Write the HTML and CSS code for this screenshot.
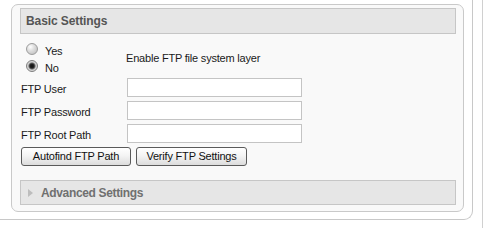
FILE: index.html
```html
<!DOCTYPE html>
<html>
<head>
<meta charset="utf-8">
<title>FTP Settings</title>
<link rel="stylesheet" href="styles.css">
</head>
<body>
<div class="viewport">
  <div class="outer">
    <div class="panel">
      <div class="section-head">Basic Settings</div>
      <div class="toggle">
        <div class="radios">
          <label class="radio-row"><input type="radio" name="ftp" class="radio"><span>Yes</span></label>
          <label class="radio-row"><input type="radio" name="ftp" class="radio" checked><span>No</span></label>
        </div>
        <div class="toggle-desc">Enable FTP file system layer</div>
      </div>
      <div class="field">
        <label class="field-label">FTP User</label>
        <input type="text" class="text-input">
      </div>
      <div class="field">
        <label class="field-label">FTP Password</label>
        <input type="password" class="text-input">
      </div>
      <div class="field">
        <label class="field-label">FTP Root Path</label>
        <input type="text" class="text-input">
      </div>
      <div class="actions">
        <button class="btn btn-autofind">Autofind FTP Path</button>
        <button class="btn btn-verify">Verify FTP Settings</button>
      </div>
      <div class="section-collapsed">
        <span class="arrow"></span>
        <span class="collapsed-title">Advanced Settings</span>
      </div>
    </div>
  </div>
</div>
</body>
</html>
```
FILE: styles.css
```css
html, body {
  margin: 0;
  padding: 0;
  background: #ffffff;
}

body {
  font-family: "Liberation Sans", Arial, sans-serif;
  font-size: 11px;
  color: #1a1a1a;
}

.viewport {
  box-sizing: border-box;
  width: 483px;
  height: 228px;
  border-right: 1px solid #d0d0d0;
}

.outer {
  box-sizing: border-box;
  width: 473px;
  height: 220px;
  border-right: 1px solid #c8c8c8;
  border-bottom: 1px solid #c8c8c8;
  border-bottom-right-radius: 9px;
  padding: 4px 0 0 11px;
}

.panel {
  box-sizing: border-box;
  width: 453px;
  height: 208px;
  border: 1px solid #c9c9c9;
  border-radius: 7px;
  background: #f9f9f9;
  padding: 3px 7px 0 8px;
}

.section-head {
  box-sizing: border-box;
  height: 26px;
  border: 1px solid #c6c6c6;
  background: #e6e6e6;
  color: #555555;
  font-weight: bold;
  font-size: 12px;
  line-height: 24px;
  padding-left: 5px;
  letter-spacing: -0.1px;
}

.toggle {
  display: flex;
  align-items: center;
  margin-top: 6px;
}

.radios {
  width: 106px;
  padding-left: 6px;
  box-sizing: border-box;
  display: flex;
  flex-direction: column;
}

.radio-row {
  display: flex;
  align-items: center;
  height: 17px;
  gap: 7px;
  letter-spacing: -0.2px;
}

.radio-row span {
  position: relative;
  top: 2px;
}

.radio {
  -webkit-appearance: none;
  appearance: none;
  margin: 0;
  width: 12px;
  height: 12px;
  border: 1px solid #9c9c9c;
  border-radius: 50%;
  background: radial-gradient(circle at 35% 30%, #ffffff 0, #e2e2e2 35%, #b8b8b8 100%);
  box-sizing: border-box;
}

.radio:checked {
  border-color: #7e7e7e;
  background: radial-gradient(circle, #111111 0, #222222 2px, #666666 3px, #cfcfcf 4px, #ececec 100%);
}

.toggle-desc {
  letter-spacing: -0.2px;
  position: relative;
  top: 1px;
}

.field {
  display: flex;
  align-items: center;
  height: 19px;
  margin-top: 4px;
}

.toggle + .field {
  margin-top: 4px;
}

.field-label {
  width: 107px;
  padding-left: 1px;
  box-sizing: border-box;
  letter-spacing: -0.2px;
  position: relative;
  top: 1px;
}

.text-input {
  box-sizing: border-box;
  width: 175px;
  height: 19px;
  margin: 0;
  border: 1px solid #c4c4c4;
  background: #ffffff;
  padding: 0 2px;
  font: inherit;
}

.actions {
  display: flex;
  gap: 5px;
  margin-top: 4px;
  padding-left: 1px;
}

.btn {
  box-sizing: border-box;
  height: 19px;
  margin: 0;
  padding: 0;
  border: 1px solid #5a5a5a;
  border-radius: 3px;
  background: linear-gradient(#ffffff 0, #f4f4f4 45%, #dcdcdc 100%);
  font-family: "Liberation Sans", Arial, sans-serif;
  font-size: 11px;
  letter-spacing: -0.2px;
  color: #111111;
  line-height: 17px;
}

.btn-autofind {
  width: 110px;
}

.btn-verify {
  width: 111px;
}

.section-collapsed {
  box-sizing: border-box;
  height: 25px;
  margin-top: 14px;
  border: 1px solid #c6c6c6;
  background: #e6e6e6;
  display: flex;
  align-items: center;
  padding-left: 7px;
}

.arrow {
  width: 0;
  height: 0;
  border-top: 4px solid transparent;
  border-bottom: 4px solid transparent;
  border-left: 5px solid #bdbdbd;
  margin-right: 8px;
}

.collapsed-title {
  font-weight: bold;
  font-size: 12px;
  color: #707070;
  letter-spacing: -0.35px;
}
```
